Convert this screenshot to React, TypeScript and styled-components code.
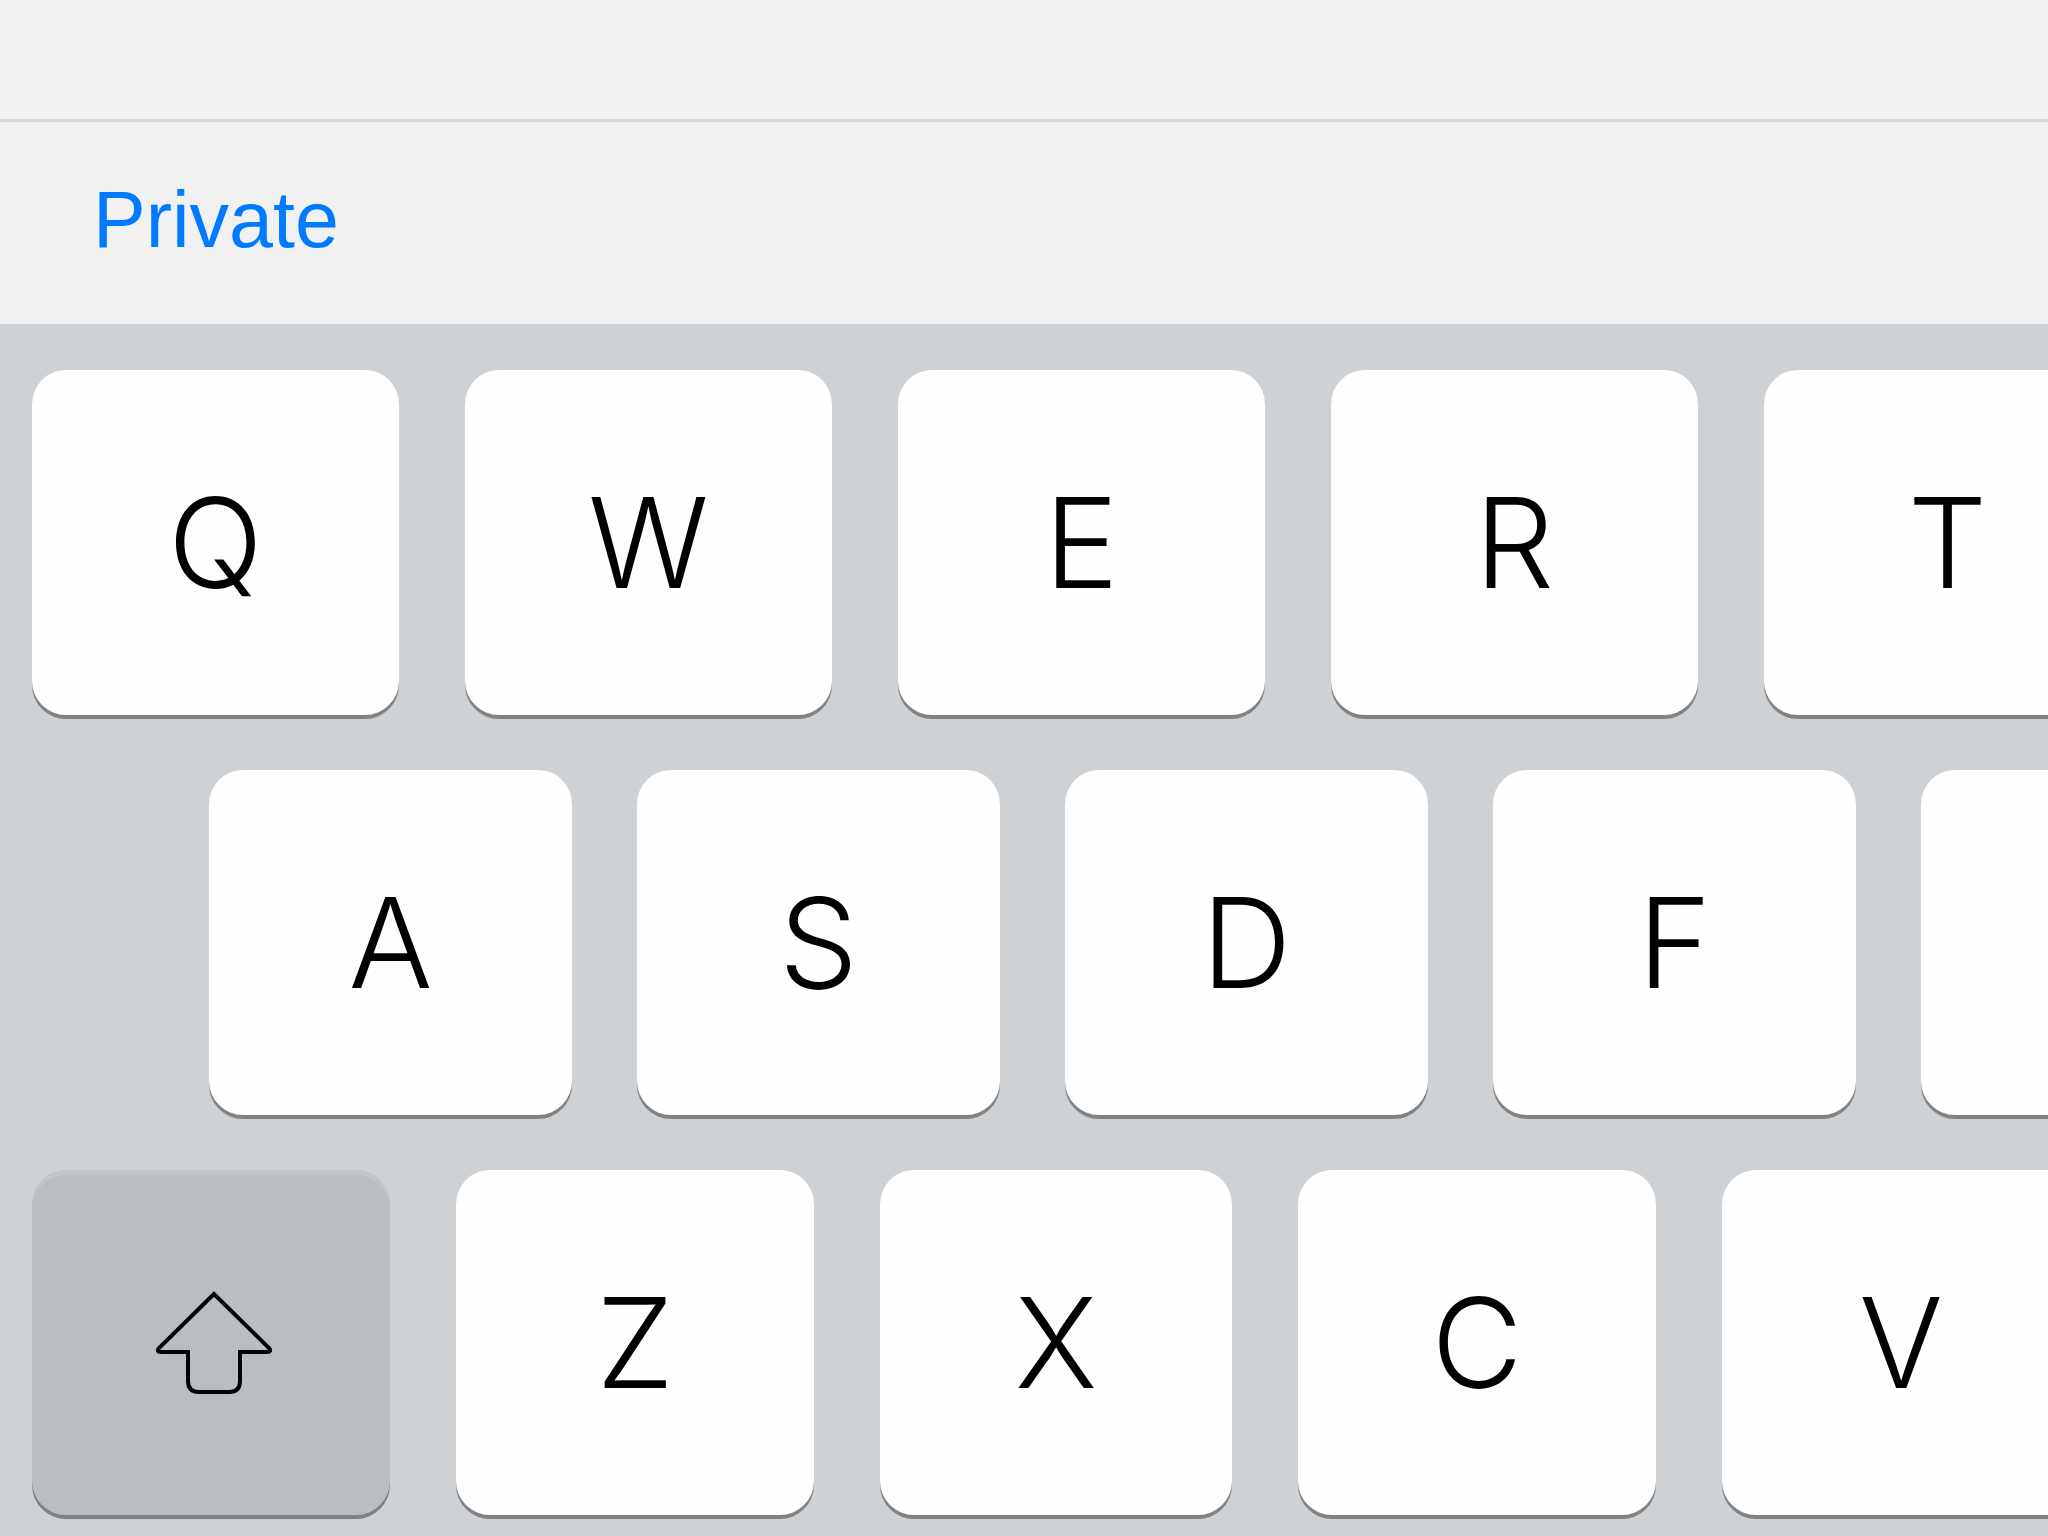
import React from 'react';
import styled, { createGlobalStyle } from 'styled-components';

const GlobalStyle = createGlobalStyle`
  * { box-sizing: border-box; }
  body { margin: 0; background: #cfd2d5; }
`;

const Page = styled.main`
  display: flex;
  flex-direction: column;
  min-height: 100vh;
  overflow: hidden;
`;

const Content = styled.div`
  height: 119px;
  background: #f1f1f1;
`;

const Toolbar = styled.nav`
  display: flex;
  align-items: center;
  height: 205px;
  padding: 0 93px 6px;
  border-top: 3px solid #d9d9d9;
  background: #f1f1f1;
`;

const TextButton = styled.button`
  padding: 0;
  border: 0;
  background: none;
  color: #007aff;
  font: 400 79px/96px "Liberation Sans", Arial, sans-serif;
`;

const Keyboard = styled.section`
  display: flex;
  flex: 1;
  flex-direction: column;
  gap: 55px;
  padding-top: 46px;
  background: #cfd2d5;
`;

const Row = styled.div<{ $inset: number; $gap: number }>`
  display: flex;
  gap: ${({ $gap }) => $gap}px;
  padding-left: ${({ $inset }) => $inset}px;
`;

const Key = styled.button<{ $width: number; $tone?: 'dark' }>`
  display: flex;
  flex: none;
  align-items: center;
  justify-content: center;
  width: ${({ $width }) => $width}px;
  height: 345px;
  padding: 0;
  border: 0;
  border-radius: 34px;
  background: ${({ $tone }) => ($tone === 'dark' ? '#babdc1' : '#fefefe')};
  box-shadow: 0 4px 0 #808284${({ $tone }) => ($tone === 'dark' ? ', inset 0 5px 0 #c3c6c9' : '')};
  color: #000;
  font: 300 125px/150px Inter, "Liberation Sans", sans-serif;
`;

const ShiftIcon = () => (
  <svg width="124" height="104" viewBox="-6 0 124 104" fill="none" stroke="#000" strokeWidth="4" aria-hidden="true">
    <path d="M59 3 4 57Q1 61 6 61H33V90Q33 101 44 101H74Q85 101 85 90V61H112Q117 61 114 57Z" />
  </svg>
);

const topRow = ['Q', 'W', 'E', 'R', 'T'];
const homeRow = ['A', 'S', 'D', 'F'];
const bottomRow = [
  { label: 'Z', width: 358 },
  { label: 'X', width: 352 },
  { label: 'C', width: 358 },
  { label: 'V', width: 358 },
];

export default function App() {
  return (
    <Page>
      <GlobalStyle />
      <Content />
      <Toolbar>
        <TextButton type="button">Private</TextButton>
      </Toolbar>
      <Keyboard aria-label="Keyboard">
        <Row $inset={32} $gap={66}>
          {topRow.map((label) => (
            <Key key={label} type="button" $width={367}>{label}</Key>
          ))}
        </Row>
        <Row $inset={209} $gap={65}>
          {homeRow.map((label) => (
            <Key key={label} type="button" $width={363}>{label}</Key>
          ))}
          <Key type="button" aria-label="G" $width={363} />
        </Row>
        <Row $inset={32} $gap={66}>
          <Key type="button" aria-label="Shift" $width={358} $tone="dark">
            <ShiftIcon />
          </Key>
          {bottomRow.map(({ label, width }) => (
            <Key key={label} type="button" $width={width}>{label}</Key>
          ))}
        </Row>
      </Keyboard>
    </Page>
  );
}
